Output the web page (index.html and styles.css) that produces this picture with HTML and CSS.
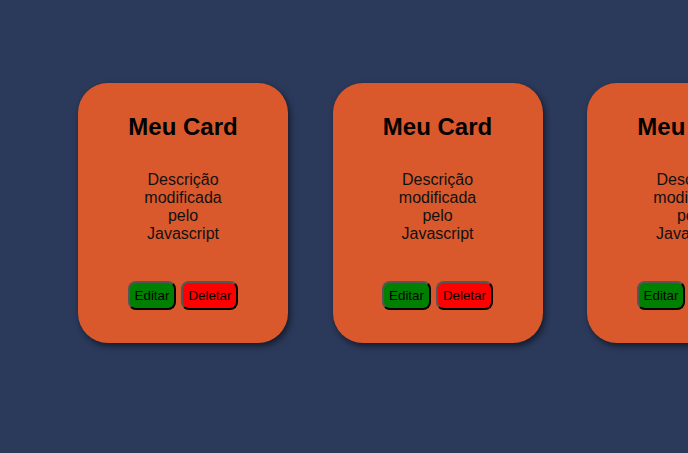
FILE: index.html
```html
<!DOCTYPE html>
<html lang="pt-BR">
<head>
<meta charset="utf-8">
<title>Cards</title>
<link rel="stylesheet" href="styles.css">
</head>
<body>
<main class="cards">
  <article class="card">
    <h1 class="card-title">Meu Card</h1>
    <p class="card-desc">Descrição modificada pelo Javascript</p>
    <div class="card-actions">
      <button class="btn btn-edit">Editar</button>
      <button class="btn btn-delete">Deletar</button>
    </div>
  </article>
  <article class="card">
    <h1 class="card-title">Meu Card</h1>
    <p class="card-desc">Descrição modificada pelo Javascript</p>
    <div class="card-actions">
      <button class="btn btn-edit">Editar</button>
      <button class="btn btn-delete">Deletar</button>
    </div>
  </article>
  <article class="card">
    <h1 class="card-title">Meu Card</h1>
    <p class="card-desc">Descrição modificada pelo Javascript</p>
    <div class="card-actions">
      <button class="btn btn-edit">Editar</button>
      <button class="btn btn-delete">Deletar</button>
    </div>
  </article>
</main>
</body>
</html>
```

FILE: styles.css
```css
html, body {
  margin: 0;
  height: 100%;
}
body {
  background: #2b395b;
  font-family: "Liberation Sans", Arial, sans-serif;
  overflow: hidden;
}
.cards {
  display: flex;
  gap: 44.5px;
  padding: 83px 0 0 78px;
}
.card {
  flex: 0 0 auto;
  width: 210px;
  height: 260px;
  box-sizing: border-box;
  padding-top: 30px;
  background: #da592c;
  border-radius: 30px;
  box-shadow: 2px 3px 6px rgba(0, 0, 0, 0.55);
  display: flex;
  flex-direction: column;
  align-items: center;
  text-align: center;
  color: #000;
}
.card-title {
  margin: 0;
  font-size: 24px;
  line-height: 28px;
  font-weight: bold;
}
.card-desc {
  margin: 30px 0 0;
  width: 100px;
  font-size: 16px;
  line-height: 18px;
  color: #111;
}
.card-actions {
  margin-top: 38px;
  display: flex;
  gap: 5px;
}
.btn {
  font-family: "Liberation Sans", Arial, sans-serif;
  font-size: 13.33px;
  line-height: 15px;
  padding: 5px;
  border: 2px solid;
  border-color: #555 #000 #000 #555;
  border-radius: 8px;
  color: #000;
  cursor: pointer;
}
.btn-edit {
  background: #008000;
}
.btn-delete {
  background: #ff0000;
}
```
